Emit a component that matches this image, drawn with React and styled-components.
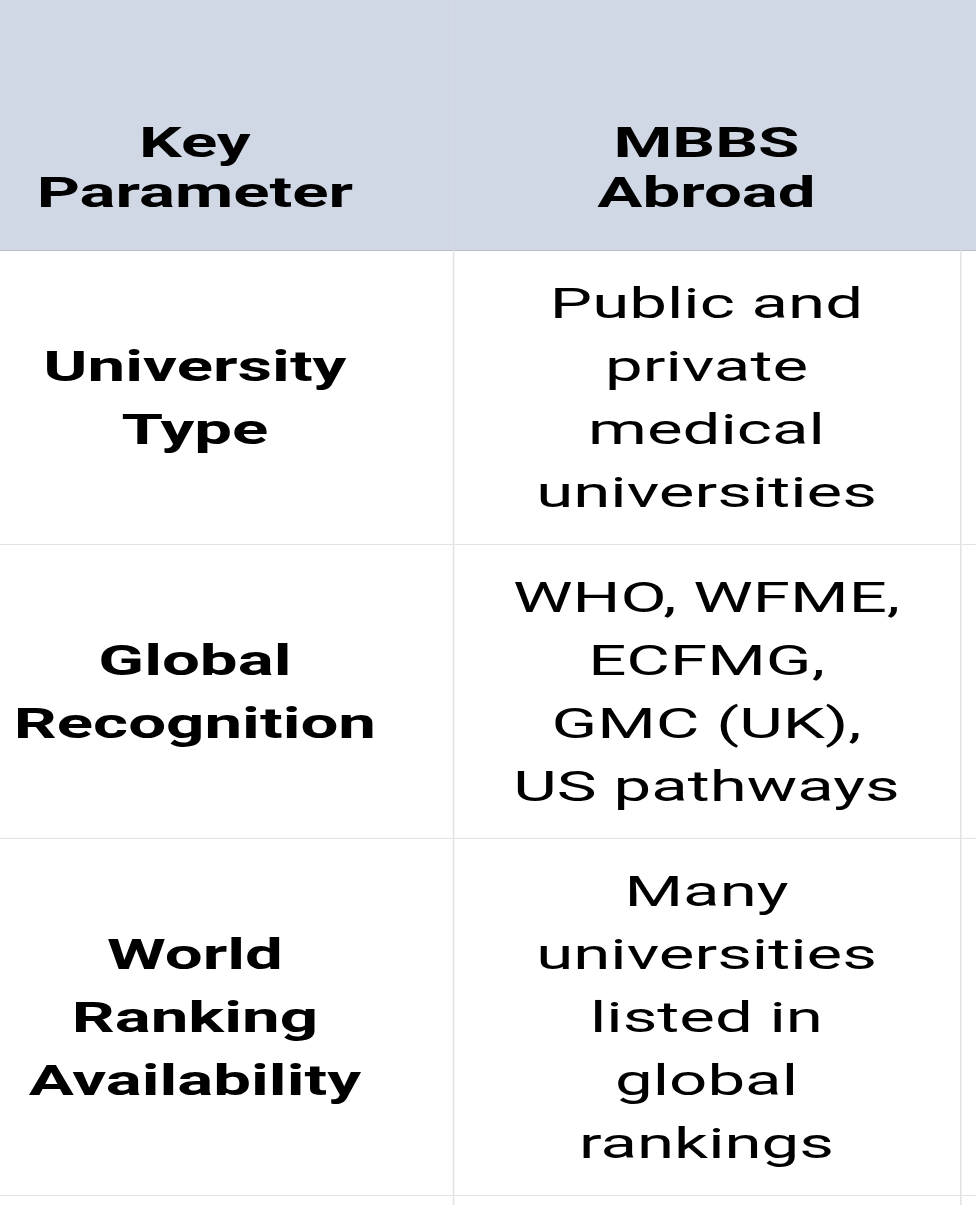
import styled, { createGlobalStyle } from "styled-components";

const GlobalStyle = createGlobalStyle`
    html, body {
        margin: 0;
        padding: 0;
        background: #ffffff;
        overflow: hidden;
    }
    body {
        font-family: Roboto, "Liberation Sans", Arial, sans-serif;
        color: #000000;
    }
`;

// the screenshot is stretched sideways, so the table is laid out narrow and widened
const STRETCH = 1.6;
const HEAD_BG = "#d1d8e5";

const rows = [
    {
        key: ["University", "Type"],
        value: ["Public and", "private", "medical", "universities"],
    },
    {
        key: ["Global", "Recognition"],
        value: ["WHO, WFME,", "ECFMG,", "GMC (UK),", "US pathways"],
    },
    {
        key: ["World", "Ranking", "Availability"],
        value: ["Many", "universities", "listed in", "global", "rankings"],
    },
];

const Lines = ({ lines }) => lines.map((l, i) => <span key={i}>{l}<br /></span>);

export default function App() {
    return <>
        <GlobalStyle />
        <Stretch>
            <Table>
                <colgroup>
                    <col style={{ width: 283.125 }} />
                    <col style={{ width: 316.875 }} />
                    <col style={{ width: 317 }} />
                </colgroup>
                <thead>
                    <HeadRow>
                        <HeadCell $first><Lines lines={["Key", "Parameter"]} /></HeadCell>
                        <HeadCell><Lines lines={["MBBS", "Abroad"]} /></HeadCell>
                        <HeadCell />
                    </HeadRow>
                </thead>
                <tbody>
                    {rows.map((r, i) => (
                        <tr key={i}>
                            <KeyCell><Lines lines={r.key} /></KeyCell>
                            <ValueCell><Lines lines={r.value} /></ValueCell>
                            <ValueCell />
                        </tr>
                    ))}
                    <tr>
                        <KeyCell $empty />
                        <ValueCell $empty />
                        <ValueCell $empty />
                    </tr>
                </tbody>
            </Table>
        </Stretch>
    </>;
}

const Stretch = styled.div`
    width: ${976 / STRETCH}px;
    transform: scaleX(${STRETCH});
    transform-origin: 0 0;
`;

const Table = styled.table`
    border-collapse: collapse;
    table-layout: fixed;
    width: 917px;
    font-size: 42px;
`;

const HeadRow = styled.tr`
    background: ${HEAD_BG};
    border-bottom: 1px solid #b7bccb;
`;

const HeadCell = styled.th`
    font-weight: 700;
    line-height: 50px;
    text-align: center;
    vertical-align: bottom;
    padding: 118px ${p => p.$first ? "39px" : "0"} 32px 0;
    border-right: 1px solid ${HEAD_BG};
`;

const KeyCell = styled.td`
    font-weight: 700;
    line-height: 63px;
    text-align: center;
    vertical-align: middle;
    padding: 21px 39px 20px 0;
    height: ${p => p.$empty ? "100px" : "auto"};
    border-bottom: 1px solid #e3e3e3;
    border-right: 1px solid #e3e3e3;
`;

const ValueCell = styled.td`
    font-weight: 400;
    line-height: 63px;
    text-align: center;
    vertical-align: middle;
    padding: 21px 0 20px;
    height: ${p => p.$empty ? "100px" : "auto"};
    border-bottom: 1px solid #e3e3e3;
    border-right: 1px solid #e3e3e3;
`;
